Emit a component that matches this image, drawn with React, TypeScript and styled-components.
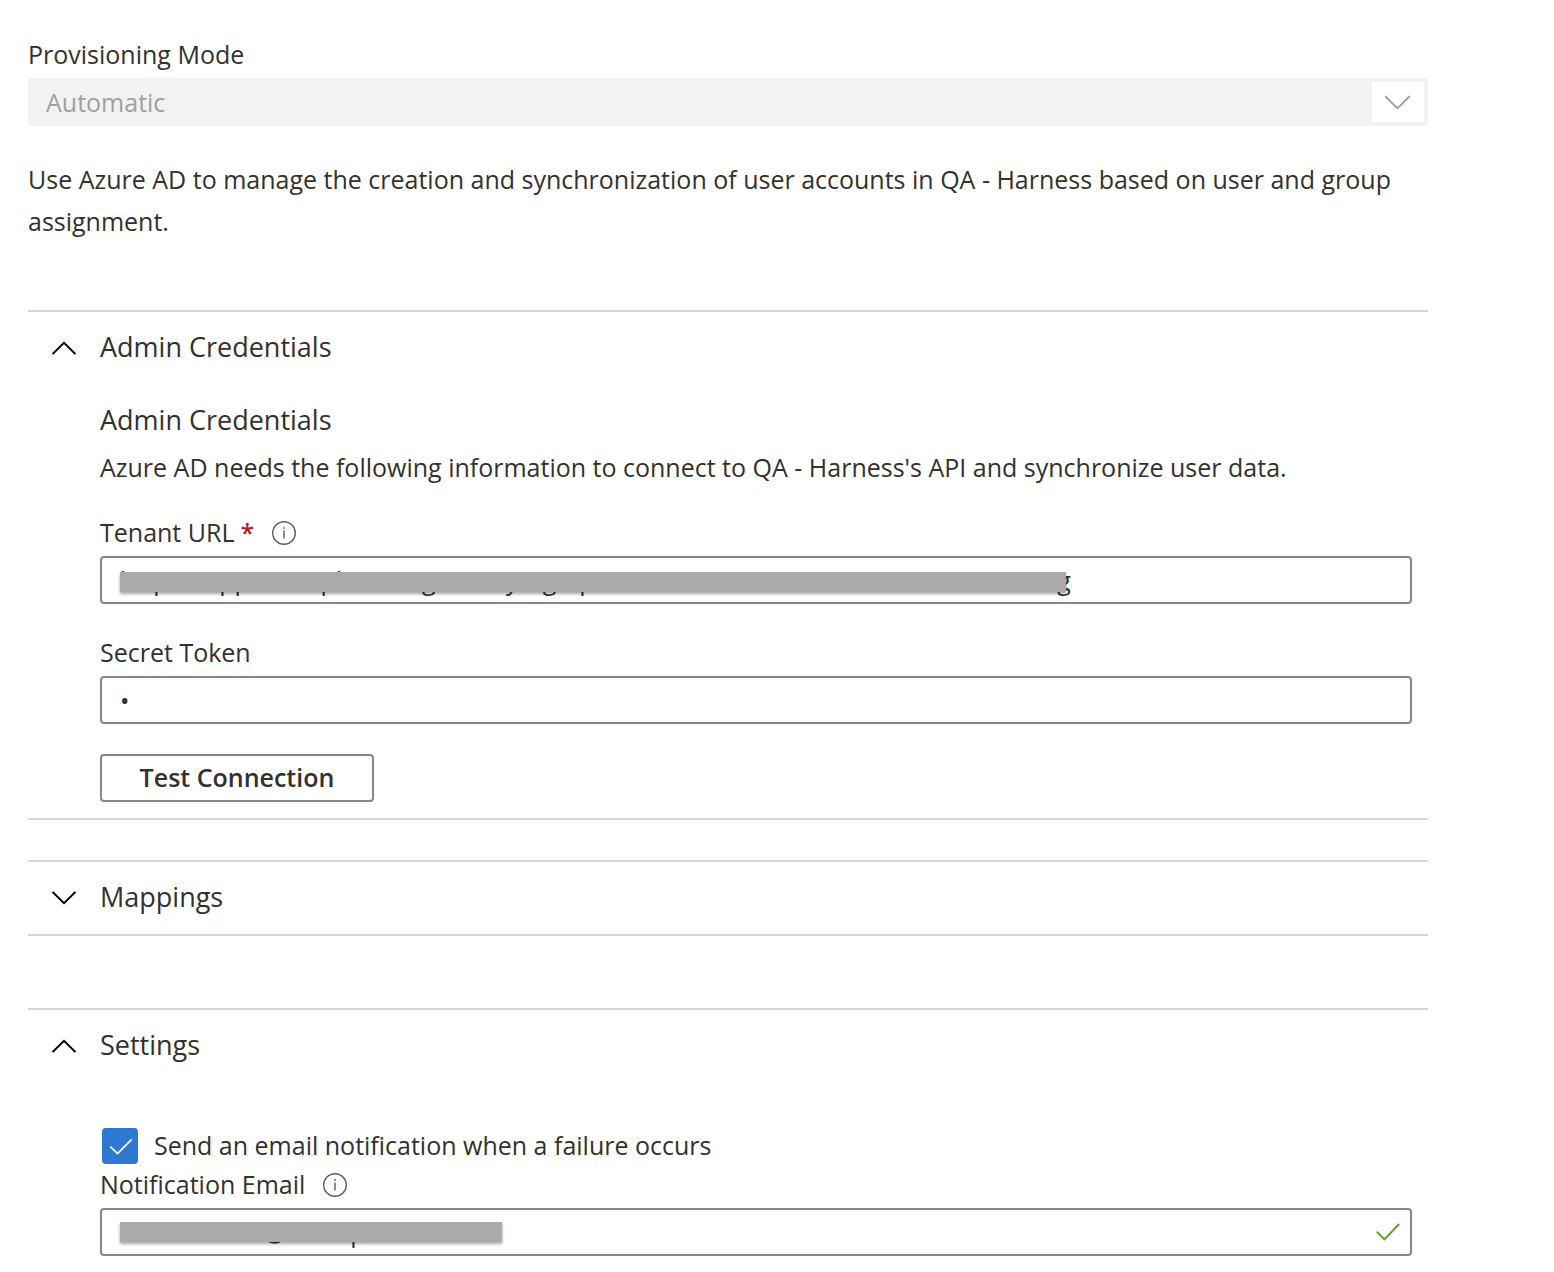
import React, { useState } from "react";
import styled, { createGlobalStyle } from "styled-components";

const GlobalStyle = createGlobalStyle`
  *, *::before, *::after { box-sizing: border-box; }
  body { margin: 0; background: #fff; }
  body, input, select, button {
    font-family: "Segoe UI", "Open Sans", "Noto Sans", sans-serif;
    font-size: 25px;
    color: #323130;
  }
`;

const Page = styled.main`
  padding: 36px 126px 16px 28px;
`;

const Field = styled.div<{ $gap?: number }>`
  margin-top: ${(p) => p.$gap ?? 0}px;
`;

const LabelRow = styled.div`
  display: flex;
  align-items: center;
  height: 36px;
  margin-bottom: 6px;
`;

const Label = styled.label`
  line-height: 36px;
`;

const Required = styled.span`
  margin-left: 6px;
  color: #a4262c;
  font-weight: 600;
`;

const InfoIcon = styled.svg`
  display: block;
  width: 24px;
  height: 24px;
  margin: 2px 0 0 18px;
`;

const Control = styled.div`
  position: relative;
`;

const Select = styled.select`
  display: block;
  width: 100%;
  height: 48px;
  padding: 0 60px 0 18px;
  appearance: none;
  border: 0;
  border-radius: 4px;
  background: #f3f2f1;
  color: #a19f9d;
  opacity: 1;
`;

const SelectArrow = styled.span`
  position: absolute;
  top: 4px;
  right: 4px;
  display: grid;
  place-items: center;
  width: 52px;
  height: 40px;
  background: #fff;
  color: #a19f9d;
  pointer-events: none;
`;

const TextInput = styled.input`
  display: block;
  width: 100%;
  height: 48px;
  padding: 0 48px 0 18px;
  border: 2px solid #8a8886;
  border-radius: 4px;
  background: #fff;
  outline: none;
`;

const Redaction = styled.span<{ $top: number; $width: number }>`
  position: absolute;
  top: ${(p) => p.$top}px;
  left: 20px;
  width: ${(p) => p.$width}px;
  height: 20px;
  background: #aaa;
  box-shadow: 0 2px 3px rgba(0, 0, 0, 0.35);
`;

const ValidMark = styled.svg`
  position: absolute;
  top: 14px;
  right: 12px;
  width: 24px;
  height: 20px;
`;

const Text = styled.p`
  margin: 0;
  line-height: 42px;
`;

const Intro = styled(Text)`
  margin: 32px 0 68px;
`;

const Section = styled.section<{ $gap?: number; $closed?: boolean }>`
  margin-top: ${(p) => p.$gap ?? 0}px;
  border-top: 2px solid #d6d6d6;
  border-bottom: ${(p) => (p.$closed ? "2px solid #d6d6d6" : "0")};
`;

const SectionTitle = styled.h2`
  margin: 0;
  font-size: 27px;
  font-weight: 400;
`;

const Toggle = styled.button`
  display: flex;
  align-items: center;
  gap: 24px;
  width: 100%;
  height: 72px;
  padding: 0 24px;
  border: 0;
  background: none;
  font-size: 27px;
  text-align: left;
`;

const ToggleText = styled.span`
  padding-bottom: 4px;
`;

const ToggleIcon = styled.svg`
  flex: none;
  width: 24px;
  height: 14px;
`;

const Body = styled.div<{ $top: number }>`
  padding: ${(p) => p.$top}px 16px 16px 72px;
`;

const SubTitle = styled.h3`
  margin: 0 0 8px;
  font-size: 27px;
  font-weight: 400;
  line-height: 36px;
`;

const ActionButton = styled.button`
  display: block;
  width: 274px;
  height: 48px;
  margin-top: 30px;
  padding: 0 0 2px;
  border: 2px solid #8a8886;
  border-radius: 4px;
  background: #fff;
  font-weight: 600;
`;

const CheckRow = styled.label`
  display: flex;
  align-items: center;
  gap: 16px;
  height: 36px;
  padding-left: 2px;
`;

const CheckText = styled.span`
  padding-bottom: 2px;
`;

const CheckBox = styled.span`
  position: relative;
  display: block;
  width: 36px;
  height: 36px;
`;

const CheckInput = styled.input`
  display: block;
  width: 36px;
  height: 36px;
  margin: 0;
  appearance: none;
  border: 2px solid #323130;
  border-radius: 4px;
  background: #fff;

  &:checked {
    border-color: #2f78d0;
    background: #2f78d0;
  }
`;

const CheckMark = styled.svg`
  position: absolute;
  inset: 0;
  width: 36px;
  height: 36px;
  pointer-events: none;
`;

function Info() {
  return (
    <InfoIcon viewBox="0 0 24 24" fill="none" aria-hidden="true">
      <circle cx="12" cy="12" r="11.3" stroke="#605e5c" strokeWidth="1.4" />
      <path d="M12 9.5V17.5" stroke="#605e5c" strokeWidth="1.4" />
      <circle cx="12" cy="7" r="0.9" fill="#605e5c" />
    </InfoIcon>
  );
}

type AccordionProps = {
  title: string;
  initiallyOpen?: boolean;
  gap?: number;
  ruled?: boolean;
  bodyTop?: number;
  children?: React.ReactNode;
};

function Accordion({ title, initiallyOpen = false, gap, ruled = true, bodyTop = 0, children }: AccordionProps) {
  const [open, setOpen] = useState(initiallyOpen);
  return (
    <Section $gap={gap} $closed={ruled}>
      <SectionTitle>
        <Toggle type="button" aria-expanded={open} onClick={() => setOpen(!open)}>
          <ToggleIcon viewBox="0 0 24 14" fill="none" stroke="#000" strokeWidth="1.8" aria-hidden="true">
            <path d={open ? "M0.6 13L12 1.8L23.4 13" : "M0.6 1L12 12.2L23.4 1"} />
          </ToggleIcon>
          <ToggleText>{title}</ToggleText>
        </Toggle>
      </SectionTitle>
      {open && children && <Body $top={bodyTop}>{children}</Body>}
    </Section>
  );
}

export default function App() {
  const [tenantUrl, setTenantUrl] = useState(
    "https://app.example.com/gateway/ng/api/scim/account/WXXXXXXXXXXXXXXXXXXg"
  );
  const [token, setToken] = useState("x");
  const [notify, setNotify] = useState(true);
  const [email, setEmail] = useState("notifications@example.com");

  return (
    <>
      <GlobalStyle />
      <Page>
        <Field>
          <LabelRow>
            <Label htmlFor="mode">Provisioning Mode</Label>
          </LabelRow>
          <Control>
            <Select id="mode" disabled defaultValue="Automatic">
              <option>Automatic</option>
            </Select>
            <SelectArrow>
              <svg width="26" height="14" viewBox="0 0 26 14" fill="none" stroke="currentColor" strokeWidth="1.8" aria-hidden="true">
                <path d="M0 1L12.4 13.4L24.8 1" />
              </svg>
            </SelectArrow>
          </Control>
        </Field>

        <Intro>
          Use Azure AD to manage the creation and synchronization of user accounts in QA - Harness based on user and
          group assignment.
        </Intro>

        <Accordion title="Admin Credentials" initiallyOpen bodyTop={18}>
          <SubTitle>Admin Credentials</SubTitle>
          <Text>Azure AD needs the following information to connect to QA - Harness's API and synchronize user data.</Text>
          <Field $gap={26}>
            <LabelRow>
              <Label htmlFor="tenant">
                Tenant URL<Required>*</Required>
              </Label>
              <Info />
            </LabelRow>
            <Control>
              <TextInput id="tenant" type="text" required value={tenantUrl} onChange={(e) => setTenantUrl(e.target.value)} />
              <Redaction $top={16} $width={946} />
            </Control>
          </Field>
          <Field $gap={30}>
            <LabelRow>
              <Label htmlFor="token">Secret Token</Label>
            </LabelRow>
            <TextInput id="token" type="password" value={token} onChange={(e) => setToken(e.target.value)} />
          </Field>
          <ActionButton type="button">Test Connection</ActionButton>
        </Accordion>

        <Accordion title="Mappings" gap={40} />

        <Accordion title="Settings" initiallyOpen gap={72} ruled={false} bodyTop={46}>
          <CheckRow>
            <CheckBox>
              <CheckInput type="checkbox" checked={notify} onChange={(e) => setNotify(e.target.checked)} />
              {notify && (
                <CheckMark viewBox="0 0 36 36" fill="none" stroke="#fff" strokeWidth="1.8" aria-hidden="true">
                  <path d="M8.3 18.6L15.5 25.6L29.7 11.4" />
                </CheckMark>
              )}
            </CheckBox>
            <CheckText>Send an email notification when a failure occurs</CheckText>
          </CheckRow>
          <Field $gap={2}>
            <LabelRow>
              <Label htmlFor="email">Notification Email</Label>
              <Info />
            </LabelRow>
            <Control>
              <TextInput id="email" type="email" value={email} onChange={(e) => setEmail(e.target.value)} />
              <Redaction $top={14} $width={382} />
              <ValidMark viewBox="0 0 24 20" fill="none" stroke="#5ea32a" strokeWidth="2" aria-hidden="true">
                <path d="M0.8 9.8L8.4 17.4L23.2 2" />
              </ValidMark>
            </Control>
          </Field>
        </Accordion>
      </Page>
    </>
  );
}
